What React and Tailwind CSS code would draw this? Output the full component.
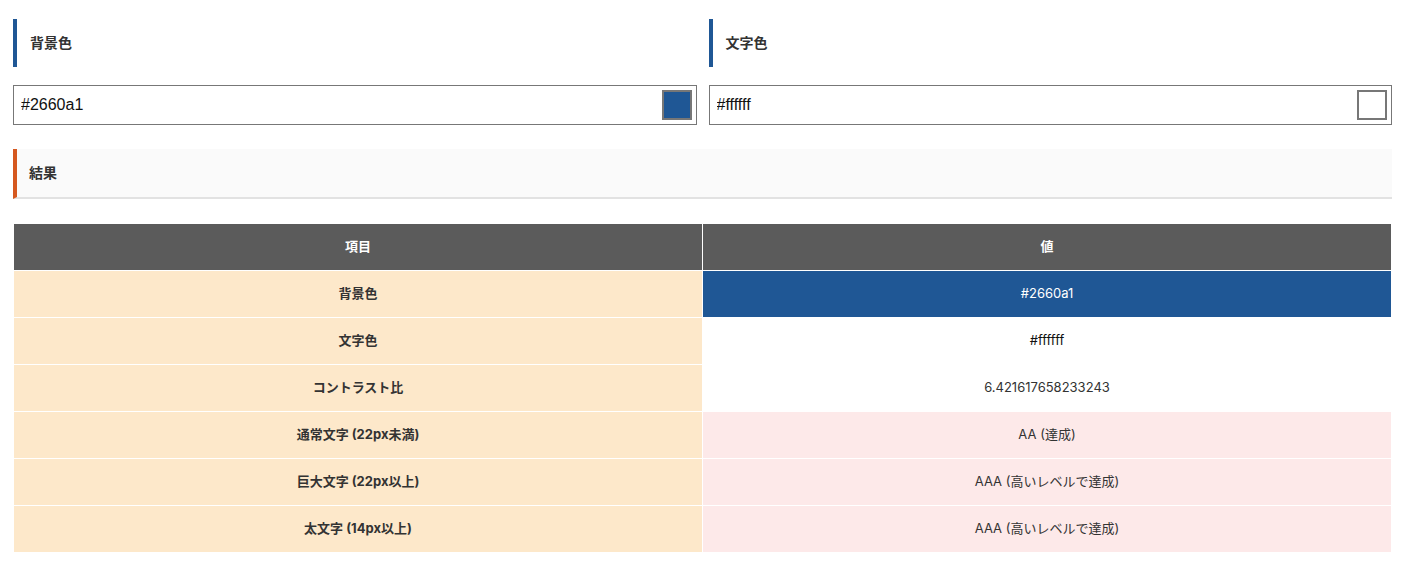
import React, { useState } from 'react';

const rows = [
  { label: '背景色', value: '#2660a1', cell: 'bg-[#1f5795] text-white' },
  { label: '文字色', value: '#ffffff', cell: 'bg-white text-[#111]' },
  { label: 'コントラスト比', value: '6.421617658233243', cell: 'bg-white text-[#333]' },
  { label: '通常文字 (22px未満)', value: 'AA (達成)', cell: 'bg-[#fde9e9] text-[#333]' },
  { label: '巨大文字 (22px以上)', value: 'AAA (高いレベルで達成)', cell: 'bg-[#fde9e9] text-[#333]' },
  { label: '太文字 (14px以上)', value: 'AAA (高いレベルで達成)', cell: 'bg-[#fde9e9] text-[#333]' },
];

function ColorField({ title, value, onChange, swatch }) {
  return (
    <div className="flex-1">
      <h3 className="h-12 mt-[19px] border-l-4 border-[#1f5795] pl-[13px] flex items-center text-sm font-bold text-[#333]">
        {title}
      </h3>
      <div className="mt-[18px] h-10 border border-[#777] flex items-center pl-[7px] pr-1">
        <input
          value={value}
          onChange={(e) => onChange(e.target.value)}
          className="flex-1 outline-none text-base text-[#111] bg-transparent font-['Liberation_Sans',sans-serif]"
        />
        <div className={`w-[30px] h-[30px] border-2 border-[#777] ${swatch}`} />
      </div>
    </div>
  );
}

export default function App() {
  const [bg, setBg] = useState('#2660a1');
  const [fg, setFg] = useState('#ffffff');

  return (
    <div
      className="px-[13px] bg-white min-h-[568px]"
      style={{ fontFamily: 'Inter, "Noto Sans CJK JP", sans-serif' }}
    >
      <div className="flex gap-3">
        <ColorField title="背景色" value={bg} onChange={setBg} swatch="bg-[#1f5795]" />
        <ColorField title="文字色" value={fg} onChange={setFg} swatch="bg-white" />
      </div>

      {/* Result */}
      <h3 className="mt-6 h-[50px] bg-[#fafafa] border-l-4 border-[#d5581f] border-b-2 border-b-[#e2e2e2] pl-3 flex items-center text-sm font-bold text-[#333]">
        結果
      </h3>

      <table className="mt-6 w-full border-collapse text-[13px] table-fixed">
        <thead>
          <tr className="h-[47px] bg-[#5b5b5b] text-white">
            <th className="border border-white font-bold">項目</th>
            <th className="border border-white font-bold">値</th>
          </tr>
        </thead>
        <tbody>
          {rows.map((r) => (
            <tr key={r.label} className="h-[47px]">
              <td className="border border-white bg-[#fde8ca] text-center font-bold text-[#333]">{r.label}</td>
              <td className={`border border-white text-center ${r.cell}`}>{r.value}</td>
            </tr>
          ))}
        </tbody>
      </table>
    </div>
  );
}
